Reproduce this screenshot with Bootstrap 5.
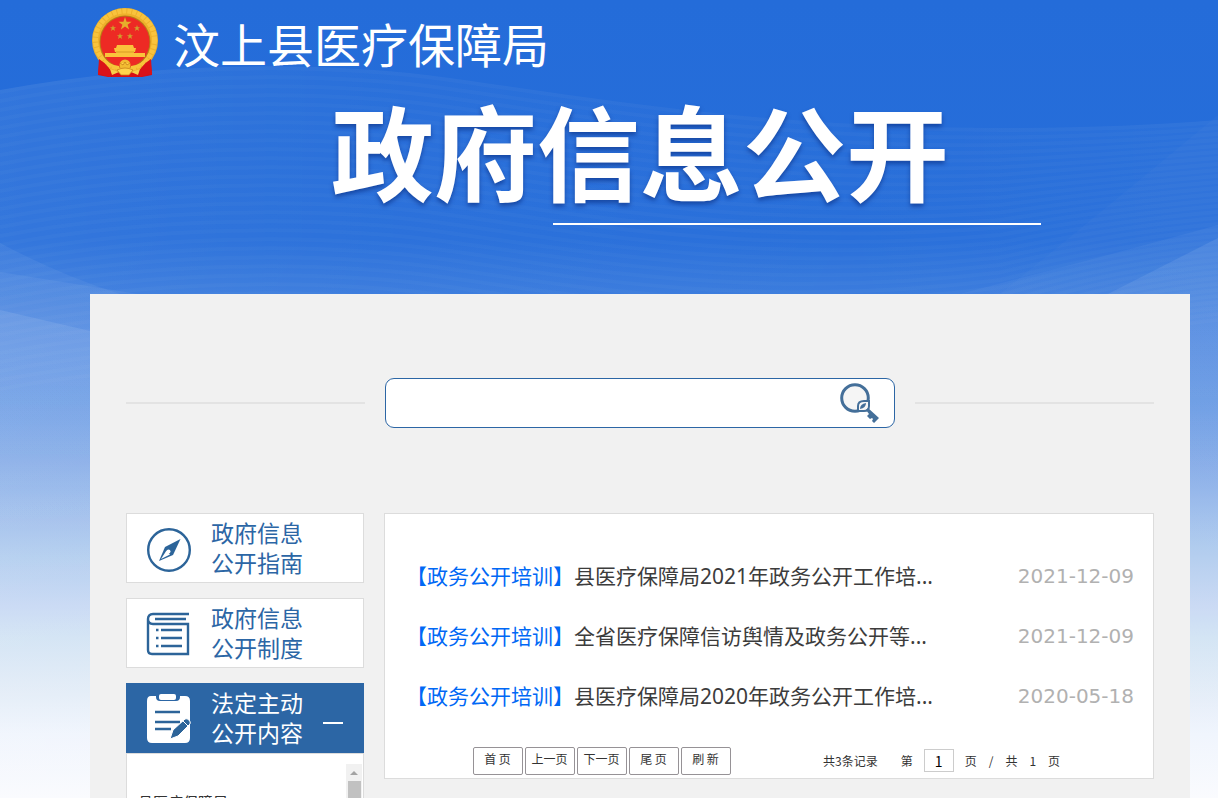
<!DOCTYPE html>
<html lang="zh-CN">
<head>
<meta charset="utf-8">
<meta name="viewport" content="width=device-width, initial-scale=1">
<title>汶上县医疗保障局 - 政府信息公开</title>
<link rel="stylesheet" href="https://cdn.jsdelivr.net/npm/bootstrap@5.3.0/dist/css/bootstrap.min.css">
<style>
  body { font-family: "Noto Sans", "Noto Sans CJK SC", sans-serif; color: #333; background: #fafbfe; }
  .page-shell { height: 100vh; }
  .backdrop { height: 798px; z-index: 0; }
  .page-main { z-index: 1; margin-left: 90px; margin-right: 28px; }
  .site-head { height: 294px; }
  .brand-row { padding: 8px 0 0 2px; gap: 15px; height: 78px; }
  .brand-name { font: 400 47px/70px "Noto Sans CJK SC", sans-serif; color: #fff; }
  .banner-title { font: 700 103px/120px "Noto Sans CJK SC", sans-serif; color: #fff; padding-top: 12px; margin: 0; text-shadow: 0 3px 4px rgba(0, 30, 110, .5); }
  .banner-rule { width: 488px; height: 2px; background: #fff; margin: 13px 149px 0 auto; }
  .panel-body { background: #f1f1f1; padding: 84px 36px 0; }
  .search-line { height: 2px; background: #e3e3e3; }
  .search-box { width: 510px; height: 50px; border: 1px solid #2c66a5; border-radius: 9px; background: #fff; padding-right: 14px; margin: 0 20px; }
  .search-box .form-control { height: 40px; background: transparent; }
  .content-row { padding-top: 85px; gap: 20px; }
  .side-col { width: 238px; }
  .side-item { height: 70px; background: #fff; border: 1px solid #dcdcdc; color: #2c66a5; font: 400 23px/30px "Noto Sans CJK SC", sans-serif; padding: 0 20px 0 19px; gap: 19px; margin-bottom: 15px; text-decoration: none; }
  .side-item span { padding-bottom: 2px; }
  .side-item.is-open { background: #2c66a5; border-color: #2c66a5; color: #fff; margin-bottom: 0; }
  .minus-mark { width: 20px; height: 2px; background: #fff; margin-top: 10px; }
  .side-tree { height: 320px; background: #fff; border: 1px solid #dcdcdc; padding: 10px 1px 0 11px; }
  .side-tree a { font: 400 15px/22px "Noto Sans CJK SC", sans-serif; color: #333; text-decoration: none; padding-top: 27px; }
  .scroll-track { width: 16px; background: #f1f1f1; }
  .scroll-thumb { width: 13px; height: 140px; background: #c1c1c1; }
  .news-box { height: 266px; background: #fff; border: 1px solid #dcdcdc; padding: 32px 19px 0 21px; }
  .news-row { height: 60px; font-size: 21px; font-weight: 400; line-height: 60px; }
  .news-row a { color: #3c3c3c; text-decoration: none; }
  .news-row .news-tag { color: #0068f5; }
  .news-row time { font: 20px/60px "DejaVu Sans", sans-serif; color: #b1b1b1; }
  .pager { font: 12px/24px "Noto Sans CJK SC", sans-serif; padding: 21px 0 0 67px; gap: 2px; }
  .pager button { width: 50px; height: 28px; border: 1px solid #969296; border-radius: 2px; background: #fff; color: #333; padding: 0 1px 4px 0; line-height: 22px; }
  .pager-info { margin-left: 90px; height: 27px; }
  .pager-total { margin-right: 23px; }
  .pager-of { gap: 12px; }
  .pager input { width: 30px; height: 23px; border: 1px solid #ccc; font: 400 14px/20px "Noto Sans CJK SC", sans-serif; color: #000; padding: 0; margin: 0 11px; }
</style>
</head>
<body>
<div class="page-shell position-relative overflow-hidden">
  <svg class="backdrop position-absolute top-0 start-0 w-100" viewBox="0 0 1218 798" preserveAspectRatio="none" aria-hidden="true">
    <defs>
      <linearGradient id="sky" x1="0" y1="0" x2="0" y2="1">
        <stop offset="0" stop-color="#246cd9"/><stop offset=".3" stop-color="#276edA"/>
        <stop offset=".37" stop-color="#3a7bdd"/><stop offset=".42" stop-color="#4c86e0"/>
        <stop offset=".5" stop-color="#6296e3"/><stop offset=".57" stop-color="#7ea7e7"/>
        <stop offset=".65" stop-color="#a0bfec"/><stop offset=".7" stop-color="#b3ceef"/>
        <stop offset=".76" stop-color="#c8d9f4"/><stop offset=".8" stop-color="#d3e4f4"/>
        <stop offset=".87" stop-color="#e4edf8"/><stop offset=".92" stop-color="#f0f5fd"/>
        <stop offset="1" stop-color="#fafbfe"/>
      </linearGradient>
      <linearGradient id="waveFill" x1="0" y1="0" x2="1" y2="0">
        <stop offset="0" stop-color="#fff" stop-opacity=".06"/><stop offset=".3" stop-color="#fff" stop-opacity=".025"/>
        <stop offset=".7" stop-color="#fff" stop-opacity=".01"/><stop offset="1" stop-color="#fff" stop-opacity=".03"/>
      </linearGradient>
      <linearGradient id="glow" x1="0" y1="0" x2="0" y2="1">
        <stop offset="0" stop-color="#fff" stop-opacity=".09"/><stop offset="1" stop-color="#fff" stop-opacity="0"/>
      </linearGradient>
    </defs>
    <rect width="1218" height="798" fill="url(#sky)"/>
    <path d="M0 90C150 62 320 60 450 78S760 128 1000 128Q1120 128 1218 120V798H0Z" fill="url(#waveFill)"/>
    <g id="waves" fill="none" stroke="#fff" stroke-opacity=".022" stroke-width="4"></g>
    <path d="M0 243Q60 275 120 294L220 340V560H0Z" fill="url(#glow)" opacity=".6"/>
    <path d="M0 272L150 296V560H0Z" fill="url(#glow)" opacity=".6"/>
    <path d="M0 310L90 331V600H0Z" fill="url(#glow)"/>
    <path d="M1218 115Q1110 205 1000 294V798H1218Z" fill="#fff" fill-opacity=".02"/>
    <path d="M1218 225Q1110 255 960 294V500H1218Z" fill="url(#glow)" opacity=".5"/>
    <path d="M1218 238L1108 294V500H1218Z" fill="url(#glow)"/>
  </svg>

  <div class="page-main position-relative">
    <header class="site-head">
      <div class="brand-row d-flex align-items-start">
        <svg width="66" height="70" viewBox="0 0 66 70" role="img" aria-label="国徽">
          <path d="M8 47L6 67L16 69H50L60 67L58 47Z" fill="#d80e15"/>
          <path d="M12 58L10 67M16 60L19 69M54 58L56 67M50 60L47 69" stroke="#8f0a10" stroke-width="1" fill="none"/>
          <ellipse cx="33" cy="32.500" rx="33" ry="32.500" fill="#eeb12b"/>
          <ellipse cx="33" cy="32" rx="29.500" ry="29" fill="none" stroke="#fbc842" stroke-width="5" stroke-dasharray="4 1" stroke-opacity=".8"/>
          <ellipse cx="33" cy="34" rx="25.500" ry="26.500" fill="#b87c17"/>
          <ellipse cx="33" cy="34" rx="24.500" ry="25.500" fill="#ed2a24"/>
          <path d="M33 9l1.600 4.700h5l-4 3 1.500 4.800-4.100-2.900-4.100 2.900 1.500-4.800-4-3h5z" fill="#e6ac2b"/>
          <g fill="#d0a02c">
            <path d="M21 17l.8 2.200h2.300l-1.800 1.400.7 2.300-2-1.400-2 1.400.7-2.300-1.800-1.400h2.300z"/>
            <path d="M45 17l.8 2.200h2.300l-1.800 1.400.7 2.300-2-1.400-2 1.400.7-2.300-1.800-1.400h2.300z"/>
            <path d="M28 25l.8 2.200h2.300l-1.800 1.400.7 2.300-2-1.400-2 1.400.7-2.300-1.800-1.400h2.300z"/>
            <path d="M38 25l.8 2.200h2.300l-1.800 1.400.7 2.300-2-1.400-2 1.400.7-2.300-1.800-1.400h2.300z"/>
          </g>
          <path d="M25 37h16l1 3h2l-1 4h-1v1h11v4H13v-4h11v-1h-1l-1-4h2z" fill="#fac33b"/>
          <path d="M24 44h18" stroke="#d99a24" stroke-width="1"/>
          <path d="M9 47Q16 57 27 58L28 63L14 56Z M57 47Q50 57 39 58L38 63L52 56Z" fill="#f6c63a"/>
          <path d="M7 51Q20 59 19 69L6 66Z M59 51Q46 59 47 69L60 66Z" fill="#db1218"/>
          <path d="M18 61L27 64L20 67Z M48 61L39 64L46 67Z" fill="#f7cf4b"/>
          <circle cx="33" cy="57" r="5.500" fill="#f2bc32"/>
          <path d="M28 55l3 2 2-3 2 3 3-2M25 62q8-4 16 0l-4 5h-8z" fill="#ffd44b" stroke="#c88218" stroke-width=".8"/>
        </svg>
        <div class="brand-name text-nowrap">汶上县医疗保障局</div>
      </div>
      <h1 class="banner-title text-center text-nowrap">政府信息公开</h1>
      <div class="banner-rule"></div>
    </header>

    <main class="panel-body">
      <form class="d-flex align-items-center" role="search" onsubmit="return false">
        <div class="search-line flex-fill"></div>
        <div class="search-box d-flex align-items-center">
          <input class="form-control border-0 shadow-none" type="text" aria-label="搜索">
          <button class="btn p-0 border-0 lh-1" type="submit" aria-label="搜索">
            <svg width="42" height="42" viewBox="0 0 42 42">
              <circle cx="17" cy="16" r="13.300" fill="#f5f5f5" stroke="#446f99" stroke-width="3"/>
              <path d="M20 29v-5q0-5 6-5h5v5q0 5-5 5z" fill="#f7f7f7" stroke="#446f99" stroke-width="2"/>
              <path d="M22 27q0-5 6-6q0 5-6 6z" fill="#446f99"/>
              <path d="M28 28l2-2 11 10-5 5-2-2 1-2-1-1-2 1-3-3 2-2z" fill="#446f99"/>
            </svg>
          </button>
        </div>
        <div class="search-line flex-fill"></div>
      </form>

      <div class="content-row d-flex align-items-start">
        <nav class="side-col flex-shrink-0">
          <a class="side-item d-flex align-items-center" href="#">
            <svg width="46" height="50" viewBox="0 -4 46 50">
              <circle cx="23" cy="23" r="20.800" fill="none" stroke="#2c6499" stroke-width="2.400"/>
              <path d="M34.500 12L27 28L13 34L19 20Z" fill="#2c6499"/>
              <path d="M15 32l5.500-8.500 3.500 4z" fill="#fff"/>
              <circle cx="22.500" cy="24.500" r="2" fill="#fff"/>
            </svg>
            <span>政府信息<br>公开指南</span>
          </a>
          <a class="side-item d-flex align-items-center" href="#">
            <svg width="46" height="48" viewBox="0 -2 46 48" fill="none" stroke="#2c6499" stroke-width="2.400">
              <path d="M43 3H7Q2 3 2 8V39Q2 43 6 43H42V13H7Q2 13 2 8M9 8H40"/>
              <path d="M15 19H36M15 27H36M15 35H36M10 19h2.500M10 27h2.500M10 35h2.500"/>
            </svg>
            <span>政府信息<br>公开制度</span>
          </a>
          <a class="side-item is-open d-flex align-items-center" href="#">
            <svg width="46" height="50" viewBox="0 0 46 50">
              <path d="M5 3h5v1q0 4 4 4h16q4 0 4-4V3h5q5 0 5 5v37q0 5-5 5H6q-5 0-5-5V8q0-5 4-5z" fill="#fff"/>
              <rect x="13" y="1" width="17" height="6" rx="2" fill="#fff"/>
              <path d="M9 19h25M9 29h25M9 36h16" stroke="#2c6499" stroke-width="2.600"/>
              <path d="M24 46l3-9 12-11q2-1 4 1t1 4L32 43z" fill="#2c6499" stroke="#fff" stroke-width="1"/>
              <path d="M37 28l5 5" stroke="#fff" stroke-width="1"/>
            </svg>
            <span>法定主动<br>公开内容</span>
            <i class="minus-mark ms-auto"></i>
          </a>
          <div class="side-tree d-flex justify-content-between">
            <a href="#">县医疗保障局</a>
            <div class="scroll-track d-flex flex-column align-items-center">
              <svg width="16" height="17" viewBox="0 0 16 17"><path d="M4 11L8 7L12 11Z" fill="#a3a3a3"/></svg>
              <div class="scroll-thumb"></div>
            </div>
          </div>
        </nav>

        <section class="news-box flex-grow-1">
          <ul class="list-unstyled m-0">
            <li class="news-row d-flex justify-content-between text-nowrap"><a href="#"><span class="news-tag">【政务公开培训】</span>县医疗保障局2021年政务公开工作培...</a><time>2021-12-09</time></li>
            <li class="news-row d-flex justify-content-between text-nowrap"><a href="#"><span class="news-tag">【政务公开培训】</span>全省医疗保障信访舆情及政务公开等...</a><time>2021-12-09</time></li>
            <li class="news-row d-flex justify-content-between text-nowrap"><a href="#"><span class="news-tag">【政务公开培训】</span>县医疗保障局2020年政务公开工作培...</a><time>2020-05-18</time></li>
          </ul>
          <div class="pager d-flex text-nowrap">
            <button type="button">首 页</button>
            <button type="button">上一页</button>
            <button type="button">下一页</button>
            <button type="button">尾 页</button>
            <button type="button">刷 新</button>
            <div class="pager-info d-flex align-items-center">
              <span class="pager-total">共3条记录</span>
              <label for="pageNo">第</label>
              <input id="pageNo" class="text-center" type="text" value="1">
              <div class="pager-of d-flex"><span>页</span><span>/</span><span>共</span><span>1</span><span>页</span></div>
            </div>
          </div>
        </section>
      </div>
    </main>
  </div>
</div>
<script src="https://cdn.jsdelivr.net/npm/bootstrap@5.3.0/dist/js/bootstrap.bundle.min.js"></script>
<script>
  // Fine contour lines that follow the edge of the banner wave
  const waves = document.getElementById('waves');
  for (let i = 0; i < 34; i++) {
    const y = i * 9, bend = i * 3;
    const line = document.createElementNS('http://www.w3.org/2000/svg', 'path');
    line.setAttribute('d', `M0 ${92 + y}C150 ${64 + y} 320 ${62 + y} 450 ${80 + y}S760 ${130 + y} 1000 ${130 + y - bend / 2}Q1120 ${130 + y - bend} 1218 ${122 + y - bend}`);
    waves.appendChild(line);
  }
</script>
</body>
</html>
